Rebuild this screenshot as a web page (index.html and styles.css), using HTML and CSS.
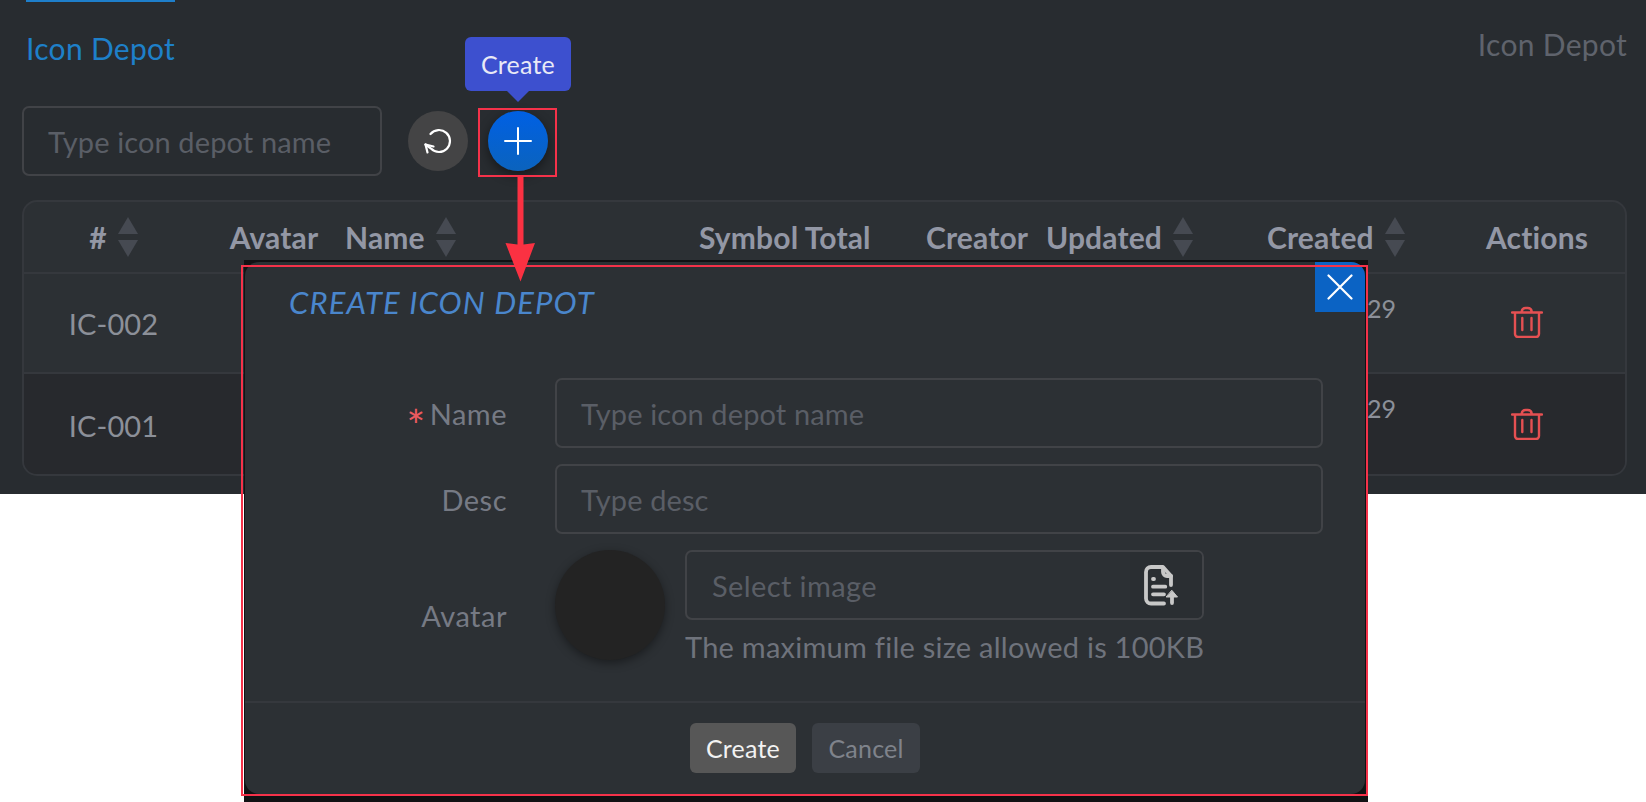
FILE: index.html
```html
<!DOCTYPE html>
<html lang="en">
<head>
<meta charset="utf-8">
<title>Icon Depot</title>
<link rel="stylesheet" href="styles.css">
</head>
<body>
<main class="page">
  <div class="tabs">
    <a class="tab">Icon Depot</a>
    <span class="crumb">Icon Depot</span>
  </div>
  <div class="toolbar">
    <input class="field search" placeholder="Type icon depot name">
    <button class="round refresh" aria-label="Refresh">
      <svg width="28" height="26" viewBox="0 0 28 26" fill="none" stroke="#fff" stroke-width="2.200" stroke-linecap="round" stroke-linejoin="round"><path d="M6.500 6A11 11 0 1 1 7 20.600L1.500 16.500"/><path d="M9.500 18.500L1.500 16.500l2 8"/></svg>
    </button>
    <div class="create-wrap">
      <div class="tooltip">Create</div>
      <button class="round add" aria-label="Create">
        <svg width="28" height="28" viewBox="0 0 28 28" stroke="#fff" stroke-width="2" stroke-linecap="round"><path d="M14 1v26M1 14h26"/></svg>
      </button>
    </div>
  </div>
  <section class="table">
    <div class="row head">
      <div class="cell center">#<i class="sort"></i></div>
      <div class="cell center">Avatar</div>
      <div class="cell">Name<i class="sort"></i></div>
      <div class="cell">Symbol Total</div>
      <div class="cell">Creator</div>
      <div class="cell">Updated<i class="sort"></i></div>
      <div class="cell">Created<i class="sort"></i></div>
      <div class="cell">Actions</div>
    </div>
    <div class="row body">
      <div class="cell center">IC-002</div><div></div><div></div><div></div><div></div><div></div>
      <div class="cell date">29</div>
      <div class="cell"><svg class="trash" width="32" height="32" viewBox="0 0 32 32" fill="none" stroke="#e55052" stroke-width="2.400" stroke-linecap="round" stroke-linejoin="round"><path d="M1 6.500h30M4 7v21a3 3 0 0 0 3 3h18a3 3 0 0 0 3-3V7M10.700 6v-.5a4 4 0 0 1 4-3.500h2a4 4 0 0 1 4 3.500V6M11.300 12v12M20.500 12v12"/></svg></div>
    </div>
    <div class="row body alt">
      <div class="cell center">IC-001</div><div></div><div></div><div></div><div></div><div></div>
      <div class="cell date">29</div>
      <div class="cell"><svg class="trash" width="32" height="32" viewBox="0 0 32 32" fill="none" stroke="#e55052" stroke-width="2.400" stroke-linecap="round" stroke-linejoin="round"><path d="M1 6.500h30M4 7v21a3 3 0 0 0 3 3h18a3 3 0 0 0 3-3V7M10.700 6v-.5a4 4 0 0 1 4-3.500h2a4 4 0 0 1 4 3.500V6M11.300 12v12M20.500 12v12"/></svg></div>
    </div>
  </section>
</main>

<div class="backdrop">
  <div class="modal">
    <button class="close" aria-label="Close">
      <svg width="26" height="26" viewBox="0 0 26 26" stroke="#fff" stroke-width="2.200" stroke-linecap="round"><path d="M1.500 1.500l23 23M24.500 1.500l-23 23"/></svg>
    </button>
    <h2 class="modal-title">CREATE ICON DEPOT</h2>
    <form class="form">
      <label class="label"><span class="req">*</span>Name</label>
      <input class="field" placeholder="Type icon depot name">
      <label class="label">Desc</label>
      <input class="field" placeholder="Type desc">
      <label class="label">Avatar</label>
      <div class="avatar-box">
        <div class="avatar"></div>
        <div class="upload">
          <div class="file-field">
            <span class="file-text">Select image</span>
            <span class="file-btn">
              <svg width="40" height="42" viewBox="0 0 40 42" fill="none" stroke="#c8c8c8" stroke-width="3.800" stroke-linecap="round" stroke-linejoin="round"><path d="M22 39.500H9a5 5 0 0 1-5-5V8a5 5 0 0 1 5-5h12l8 9v9"/><path d="M21 4v4a4 4 0 0 0 4 4h4"/><path d="M11 15h1M11 22.700h12.300M11 30.300h11"/><path d="M30 39V30" stroke-width="3.800"/><path d="M30 26.500l5.500 6.500h-11z" fill="#c8c8c8" stroke-width="1"/></svg>
            </span>
          </div>
          <p class="hint">The maximum file size allowed is 100KB</p>
        </div>
      </div>
    </form>
    <footer class="modal-foot">
      <button class="btn primary" type="button">Create</button>
      <button class="btn ghost" type="button">Cancel</button>
    </footer>
  </div>
</div>

<div class="mark mark-btn"></div>
<div class="mark mark-modal"></div>
<svg class="arrow" width="32" height="106" viewBox="0 0 32 106"><path fill="#fb3142" d="M12.500 0h6v67.500l11.500-1.500L15.500 104.500 .5 66l12 1.500z"/></svg>
</body>
</html>
```
FILE: styles.css
```css
* { box-sizing: border-box; }
html, body { margin: 0; height: 802px; overflow: hidden; background: #fff; }
body { font-family: "Lato", "Noto Sans", sans-serif; color: #8c9099; font-size: 29px; letter-spacing: .12px; }

.page { height: 494px; background: #282c30; padding: 0 19px 0 22px; }

.tabs { display: flex; justify-content: space-between; align-items: flex-start; height: 106px; font-size: 30px; letter-spacing: .3px; }
.tab { margin-left: 4px; padding-top: 29px; border-top: 2px solid #1e7fcb; color: #1e80c9; line-height: 34px; }
.crumb { padding-top: 27px; line-height: 34px; color: #5f636c; }

.toolbar { display: flex; align-items: center; height: 70px; }
.field {
  display: block; width: 100%; height: 70px; padding: 0 24px;
  background: transparent; border: 2px solid #414347; border-radius: 7px;
  font: inherit; letter-spacing: inherit; color: #8c9099; outline: none;
}
.field::placeholder { color: #5a5e66; opacity: 1; }
.search { width: 360px; margin-right: 26px; align-self: flex-start; }
.round { display: flex; align-items: center; justify-content: center; width: 60px; height: 60px; padding: 0; border: 0; border-radius: 50%; }
.refresh { background: #444445; }
.add { background: linear-gradient(#0060e4, #0b63bd); box-shadow: 0 4px 12px rgba(0,0,0,.45); }
.create-wrap { position: relative; margin-left: 20px; }
.tooltip {
  position: absolute; left: -23px; top: -74px; width: 106px; height: 54px;
  display: flex; align-items: center; justify-content: center;
  background: #3d50cf; border-radius: 6px; color: #e8e9f6; font-size: 25px; letter-spacing: .2px;
}
.tooltip::after {
  content: ""; position: absolute; left: 42px; top: 54px;
  border: 11px solid transparent; border-top-color: #3d50cf; border-bottom: 0;
}

.table { margin-top: 24px; height: 276px; border: 2px solid #35383d; border-radius: 15px; overflow: hidden; background: #2c3034; }
.row { display: grid; grid-template-columns: 179px 142px 354px 227px 120px 221px 219px 139px; align-items: center; }
.head { height: 70px; font-size: 30px; font-weight: 700; letter-spacing: .15px; color: #9397a5; }
.body { height: 100px; border-top: 2px solid #35383d; }
.alt { height: 104px; background: #27292d; }
.cell { display: flex; align-items: center; }
.center { justify-content: center; }
.date { padding: 0 0 30px 100px; font-size: 25px; color: #8c9099; }
.alt .date { padding-bottom: 34px; }
.trash { margin: 0 0 2px 25px; }
.sort { display: flex; flex-direction: column; justify-content: space-between; width: 20px; height: 40px; margin-left: 11px; }
.sort::before { content: ""; border: 10px solid transparent; border-top: 0; border-bottom: 17px solid #464a52; }
.sort::after { content: ""; border: 10px solid transparent; border-bottom: 0; border-top: 17px solid #464a52; }

.backdrop { position: absolute; left: 244px; top: 260px; width: 1124px; height: 542px; padding: 2px 3px 8px 1px; background: #111214; }
.modal { position: relative; display: flex; flex-direction: column; height: 100%; background: #2c3034; border-radius: 14px; }
.close {
  position: absolute; right: 0; top: 0; width: 50px; height: 50px; padding: 0;
  display: flex; align-items: center; justify-content: center;
  border: 0; border-top-right-radius: 14px; background: #0b63c4;
}
.modal-title { margin: 23px 0 0 44px; font-size: 31px; line-height: 34px; letter-spacing: 1.1px; font-weight: 400; font-style: italic; color: #4a86cc; }
.form { display: grid; grid-template-columns: 262px 768px; column-gap: 48px; row-gap: 16px; align-items: center; padding-top: 59px; flex: 1; align-content: start; }
.label { text-align: right; color: #767a84; letter-spacing: .5px; }
.req { display: inline-block; margin-right: 4px; font-size: 44px; line-height: 0; color: #ea5a5f; transform: translateY(17px); }
.avatar-box { display: flex; gap: 20px; align-items: flex-start; }
.avatar { width: 110px; height: 110px; border-radius: 50%; background: #232323; box-shadow: 0 3px 10px rgba(0,0,0,.4); flex: none; }
.upload { width: 519px; padding-bottom: 16px; }
.file-field { display: flex; justify-content: space-between; align-items: center; height: 70px; padding-left: 25px; border: 2px solid #414347; border-radius: 7px; overflow: hidden; }
.file-text { color: #5a5e66; letter-spacing: .4px; }
.file-btn { display: flex; align-items: center; justify-content: center; width: 72px; height: 100%; background: #2a2e32; padding-right: 8px; }
.hint { margin: 9px 0 0; line-height: 36px; letter-spacing: .25px; color: #6f737c; white-space: nowrap; }

.modal-foot { display: flex; justify-content: center; gap: 16px; padding-top: 20px; height: 93px; border-top: 2px solid #35383d; }
.btn { height: 50px; padding: 0; border: 0; border-radius: 6px; font: inherit; font-size: 25px; letter-spacing: .2px; }
.primary { width: 106px; background: #575757; color: #f2f2f2; }
.ghost { width: 108px; background: #3b3f45; color: #7f838b; }

.mark { position: absolute; border: 2px solid #f5324a; pointer-events: none; }
.mark-btn { left: 478px; top: 108px; width: 79px; height: 69px; }
.mark-modal { left: 241px; top: 265px; width: 1127px; height: 531px; }
.arrow { position: absolute; left: 505px; top: 177px; }
```
